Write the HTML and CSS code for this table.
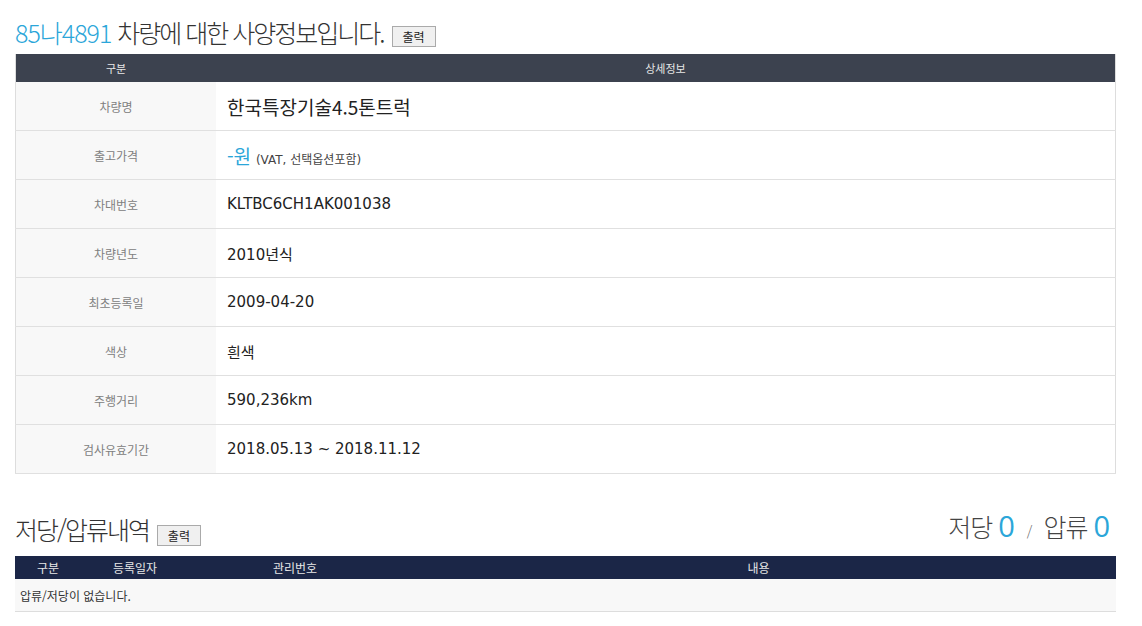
FILE: index.html
```html
<!DOCTYPE html>
<html lang="ko">
<head>
<meta charset="utf-8">
<link rel="stylesheet" href="styles.css">
</head>
<body>
<div class="page">
  <div class="title-row">
    <h1 class="title"><span class="plate">85나4891</span> <span class="ko">차량에 대한 사양정보입니다.</span></h1>
    <button class="print-btn">출력</button>
  </div>
  <table class="spec">
    <thead>
      <tr><th class="col-label">구분</th><th>상세정보</th></tr>
    </thead>
    <tbody>
      <tr><td class="label">차량명</td><td class="value name">한국특장기술4.5톤트럭</td></tr>
      <tr><td class="label">출고가격</td><td class="value"><span class="price">-원</span> <span class="note">(VAT, 선택옵션포함)</span></td></tr>
      <tr><td class="label">차대번호</td><td class="value">KLTBC6CH1AK001038</td></tr>
      <tr><td class="label">차량년도</td><td class="value">2010년식</td></tr>
      <tr><td class="label">최초등록일</td><td class="value">2009-04-20</td></tr>
      <tr><td class="label">색상</td><td class="value">흰색</td></tr>
      <tr><td class="label">주행거리</td><td class="value">590,236km</td></tr>
      <tr><td class="label">검사유효기간</td><td class="value">2018.05.13 ~ 2018.11.12</td></tr>
    </tbody>
  </table>

  <div class="section2-head">
    <div class="left">
      <h2 class="title2">저당/압류내역</h2>
      <button class="print-btn">출력</button>
    </div>
    <div class="counts">저당 <span class="num">0</span> <span class="slash">/</span> 압류 <span class="num">0</span></div>
  </div>
  <table class="lien">
    <thead>
      <tr><th class="c1">구분</th><th class="c2">등록일자</th><th class="c3">관리번호</th><th class="c4">내용</th></tr>
    </thead>
    <tbody>
      <tr><td colspan="4" class="empty">압류/저당이 없습니다.</td></tr>
    </tbody>
  </table>
</div>
</body>
</html>
```

FILE: styles.css
```css
html, body {
  margin: 0;
  padding: 0;
  background: #ffffff;
}
body {
  font-family: "Noto Sans CJK KR", "Noto Sans", sans-serif;
  color: #333333;
}
.page {
  width: 1101px;
  padding: 14px 0 0 15px;
}
.title-row {
  display: flex;
  align-items: flex-end;
  height: 36px;
  gap: 8px;
}
.title {
  margin: 0;
  font-size: 25px;
  font-weight: 300;
  letter-spacing: -1px;
  line-height: 36px;
  color: #333333;
}
.title .ko {
  letter-spacing: -2px;
}
.plate {
  color: #2ba6d9;
}
.print-btn {
  font-family: "Noto Sans CJK KR", sans-serif;
  font-size: 12px;
  line-height: 12px;
  width: 44px;
  height: 21px;
  padding: 0;
  background: #f0f0f0;
  border: 1px solid #aaaaaa;
  color: #222222;
  margin-bottom: 3px;
}
.spec {
  width: 1101px;
  border-collapse: collapse;
  margin-top: 4px;
  border-right: 1px solid #dddddd;
  border-left: 1px solid #dddddd;
}
.spec th {
  background: #3c424f;
  color: #e8e8e8;
  font-size: 11px;
  font-weight: 400;
  height: 28px;
  padding: 0;
  text-align: center;
}
.spec th.col-label {
  width: 200px;
}
.spec td {
  height: 48px;
  border-bottom: 1px solid #e0e0e0;
  padding: 0;
}
.spec td.label {
  background: #f8f8f8;
  text-align: center;
  font-size: 12px;
  color: #808080;
}
.spec td.value {
  padding-left: 11px;
  font-size: 15px;
  color: #222222;
  font-family: "DejaVu Sans", "Noto Sans CJK KR", sans-serif;
}
.spec td.value.name {
  font-family: "Noto Sans CJK KR", sans-serif;
  font-size: 19px;
  letter-spacing: 0;
}
.price {
  color: #2ba6d9;
  font-size: 19px;
  font-family: "Noto Sans CJK KR", sans-serif;
}
.note {
  font-size: 12px;
  color: #444444;
}
.section2-head {
  display: flex;
  justify-content: space-between;
  align-items: flex-end;
  margin-top: 40px;
  height: 38px;
}
.section2-head .left {
  display: flex;
  align-items: flex-end;
  gap: 8px;
}
.title2 {
  margin: 0 0 5px 0;
  font-size: 25px;
  font-weight: 300;
  letter-spacing: -2px;
  line-height: 36px;
  color: #333333;
}
.section2-head .print-btn {
  margin-bottom: 6px;
}
.counts {
  font-size: 25px;
  font-weight: 300;
  color: #444444;
  line-height: 36px;
  padding-right: 6px;
  margin-bottom: 3px;
  letter-spacing: -1px;
}
.counts .num {
  color: #2ba6d9;
  font-size: 29px;
  font-weight: 400;
  font-family: "Open Sans", sans-serif;
  letter-spacing: 0;
}
.counts .slash {
  font-size: 14px;
  color: #666666;
  margin: 0 6px;
}
.lien {
  width: 1101px;
  border-collapse: collapse;
  margin-top: 4px;
}
.lien th {
  background: #1b2647;
  color: #e8e8e8;
  font-size: 12px;
  font-weight: 400;
  height: 23px;
  padding: 0;
  text-align: center;
}
.lien th.c1 { width: 66px; }
.lien th.c2 { width: 108px; }
.lien th.c3 { width: 212px; }
.lien td.empty {
  background: #f8f8f8;
  height: 32px;
  padding: 0 0 0 5px;
  font-size: 12px;
  color: #333333;
  border-bottom: 1px solid #dddddd;
}
```
